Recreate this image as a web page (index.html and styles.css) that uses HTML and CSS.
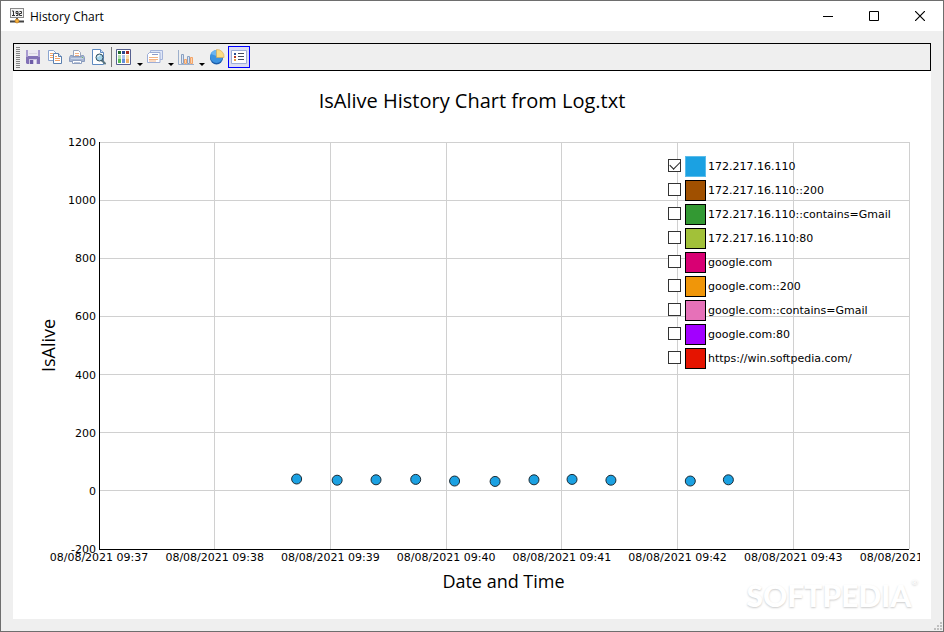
FILE: index.html
```
<!DOCTYPE html>
<html lang="en">
<head>
<meta charset="UTF-8">
<meta name="viewport" content="width=device-width, initial-scale=1.0">
<title>History Chart</title>
<link rel="stylesheet" href="styles.css">
</head>
<body>
<div class="window">

<header class="titlebar">
    <svg class="app-icon" width="16" height="16" viewBox="0 0 16 16">
        <rect x="1.500" y="0.500" width="13" height="9" fill="#f4f4f4" stroke="#8a8a8a"/>
        <path d="M3 3h1.500v4M3 7.500h3M7 3.500h2v3M9 5.500H7v-2M9 6v1.500H7M10.500 3.500h2v2h-2v2h2.500" fill="none" stroke="#333"/>
        <path d="M8 10v2" stroke="#555" stroke-width="2"/>
        <path d="M1 13.500h14" stroke="#444" stroke-width="2"/>
        <circle cx="8" cy="13" r="2" fill="#f7b23b" stroke="#b9741a" stroke-width=".6"/>
    </svg>
    <span class="window-title">History Chart</span>
    <button class="win-btn" aria-label="Minimize">
        <svg width="10" height="11" viewBox="0 0 10 11"><path d="M0 5.500h10" stroke="#000"/></svg>
    </button>
    <button class="win-btn" aria-label="Maximize">
        <svg width="10" height="10" viewBox="0 0 10 10"><path d="M.5.5h9v9h-9z" fill="none" stroke="#000"/></svg>
    </button>
    <button class="win-btn" aria-label="Close">
        <svg width="10" height="10" viewBox="0 0 10 10"><path d="M0 0l10 10M10 0L0 10" stroke="#000" stroke-width="1.200"/></svg>
    </button>
</header>

<main class="client">
    <div class="toolbar">
        <span class="grip"></span>
        <button class="tool" aria-label="Save">
            <svg width="16" height="16" viewBox="0 0 16 16">
                <path d="M1 1h14v14H2l-1-1z" fill="#8271b6"/>
                <path d="M1 1h2v7H1zM13 1h2v7h-2z" fill="#a89bd0"/>
                <path d="M3 1h10v6H3z" fill="#eceaf3"/>
                <path d="M4 4.500h8" stroke="#d9d7e2"/>
                <path d="M4 10h8v5H4z" fill="#cbc5e2"/>
                <path d="M5 11h3v4H5z" fill="#6d5ca6"/>
                <path d="M9 11h2v4H9z" fill="#efedf6"/>
            </svg>
        </button>
        <button class="tool" aria-label="Copy">
            <svg width="16" height="16" viewBox="0 0 16 16">
                <path d="M1.500 1.500h5l3 3v7h-8z" fill="#fff" stroke="#8aa5d0"/>
                <path d="M3 4.500h3M3 6.500h4M3 8.500h4" stroke="#f3a468"/>
                <path d="M6.500 4.500h5l3 3v7h-8z" fill="#fff" stroke="#5b7fae"/>
                <path d="M11.500 4.500v3h3" fill="#d6e4f5" stroke="#5b7fae"/>
                <path d="M8 7.500h2M8 9.500h5M8 11.500h5" stroke="#f3a468"/>
            </svg>
        </button>
        <button class="tool" aria-label="Print">
            <svg width="16" height="16" viewBox="0 0 16 16">
                <path d="M4.500 7V1.500h5l2 2V7" fill="#fff" stroke="#9aa6bd"/>
                <path d="M6 4.500h4M6 6.500h4" stroke="#f3b184"/>
                <path d="M1.500 6.500h2v1h9v-1h2l1 2v4H.5v-4z" fill="#a7b6d3" stroke="#8b9cbe"/>
                <path d="M2 9.500h12" stroke="#c8d4e8"/>
                <path d="M13 8h1v1h-1z" fill="#6bc35a"/>
                <path d="M3.500 11.500h9v3h-9z" fill="#fff" stroke="#8fa0c0"/>
                <path d="M5 13.500h6" stroke="#b8c3d8"/>
            </svg>
        </button>
        <button class="tool" aria-label="Print preview">
            <svg width="16" height="16" viewBox="0 0 16 16">
                <path d="M1.500.5h8l3 3v12h-11z" fill="#fff" stroke="#5f8ac0"/>
                <path d="M9.500.5v3h3" fill="#cfe0f4" stroke="#5f8ac0"/>
                <path d="M11 11.500l3 3" stroke="#5c7680" stroke-width="2" stroke-linecap="round"/>
                <circle cx="8.500" cy="8.500" r="3.500" fill="#a6d5ea" stroke="#33505e"/>
                <path d="M6.700 8a2 2 0 0 1 2-1.600" fill="none" stroke="#fff"/>
            </svg>
        </button>
        <span class="separator"></span>
        <button class="tool" aria-label="Palette">
            <svg width="16" height="16" viewBox="0 0 16 16">
                <path d="M.5.5h14v15H.5z" fill="#fff" stroke="#56608f"/>
                <path d="M2 2h3v3H2z" fill="#226b2e"/><path d="M6 2h3v3H6z" fill="#2c4790"/><path d="M10 2h3v3h-3z" fill="#a52b22"/>
                <path d="M2 6h3v4H2z" fill="#b2e0ad"/><path d="M6 6h3v4H6z" fill="#a9c6f0"/><path d="M10 6h3v4h-3z" fill="#f9dda6"/>
                <path d="M2 10h3v4H2z" fill="#55b956"/><path d="M6 10h3v4H6z" fill="#668fdc"/><path d="M10 10h3v4h-3z" fill="#efb168"/>
            </svg>
        </button>
        <button class="drop" aria-label="Palette options"></button>
        <button class="tool" aria-label="Titles">
            <svg width="16" height="16" viewBox="0 0 16 16">
                <path d="M3.500 4V1.500h12v9H13" fill="#dfe7f7" stroke="#a5b4da"/>
                <path d="M.5 5.500l2-2h10.500v10H.5z" fill="#fff" stroke="#9dadd6"/>
                <path d="M5 5.500h6" stroke="#8d9cc9"/>
                <path d="M2 8.500h9M2 10.500h9M2 12h7" stroke="#f5b384"/>
            </svg>
        </button>
        <button class="drop" aria-label="Title options"></button>
        <button class="tool" aria-label="Chart type">
            <svg width="16" height="16" viewBox="0 0 16 16">
                <path d="M.5 1v14.500H16" fill="none" stroke="#9cafcb"/>
                <path d="M3.500 5.500h2v9h-2zM9.500 7.500h2v7h-2z" fill="#dbe7f6" stroke="#8ba0c0"/>
                <path d="M6.500 10.500h2v4h-2zM12.500 8.500h2v6h-2z" fill="#fbd3ae" stroke="#f3a468"/>
            </svg>
        </button>
        <button class="drop" aria-label="Chart type options"></button>
        <button class="tool" aria-label="3D pie">
            <svg width="16" height="16" viewBox="0 0 16 16">
                <ellipse cx="7.500" cy="9" rx="6.500" ry="6.500" fill="#1c5ca8"/>
                <ellipse cx="7.500" cy="7.500" rx="6.500" ry="6.500" fill="#3c93e0"/>
                <path d="M2 5a6.500 6.500 0 0 1 5.500-4v6" fill="#6bb5f0"/>
                <path d="M7.500 8.500V.5a7 7 0 0 1 7.500 8z" fill="#fbdc83" stroke="#d7a850" stroke-width=".6"/>
            </svg>
        </button>
        <button class="tool active" aria-label="Legend" aria-pressed="true">
            <svg width="16" height="16" viewBox="0 0 16 16">
                <path d="M.5 1.500h15v13H.5z" fill="#fff" stroke="#9dadd6"/>
                <path d="M3 4h2v2H3z" fill="#2d4f92"/><path d="M3 7h2v2H3z" fill="#b33a27"/><path d="M3 10h2v2H3z" fill="#eb9a3c"/>
                <path d="M7 4.500h6M7 7.500h6M7 10.500h6" stroke="#444a5e"/>
            </svg>
        </button>
    </div>

    <section class="chart">
        <h1 class="chart-title">IsAlive History Chart from Log.txt</h1>

        <div class="chart-body">
            <div class="y-title">IsAlive</div>
            <div class="plot">
                <svg class="plot-svg" width="100%" height="100%">
                    <g class="grid">
                        <line x1="14.286%" x2="14.286%" y1="0" y2="100%"/>
                        <line x1="28.571%" x2="28.571%" y1="0" y2="100%"/>
                        <line x1="42.857%" x2="42.857%" y1="0" y2="100%"/>
                        <line x1="57.143%" x2="57.143%" y1="0" y2="100%"/>
                        <line x1="71.429%" x2="71.429%" y1="0" y2="100%"/>
                        <line x1="85.714%" x2="85.714%" y1="0" y2="100%"/>
                        <line x1="100%" x2="100%" y1="0" y2="100%"/>
                        <line x1="0" x2="100%" y1="0" y2="0"/>
                        <line x1="0" x2="100%" y1="14.286%" y2="14.286%"/>
                        <line x1="0" x2="100%" y1="28.571%" y2="28.571%"/>
                        <line x1="0" x2="100%" y1="42.857%" y2="42.857%"/>
                        <line x1="0" x2="100%" y1="57.143%" y2="57.143%"/>
                        <line x1="0" x2="100%" y1="71.429%" y2="71.429%"/>
                        <line x1="0" x2="100%" y1="85.714%" y2="85.714%"/>
                    </g>
                    <g class="axis">
                        <line x1="0" x2="0" y1="0" y2="100%"/>
                        <line x1="0" x2="100%" y1="100%" y2="100%"/>
                    </g>
                    <g class="y-labels">
                        <text x="0" y="0" dx="-3" dy="4">1200</text>
                        <text x="0" y="14.286%" dx="-3" dy="4">1000</text>
                        <text x="0" y="28.571%" dx="-3" dy="4">800</text>
                        <text x="0" y="42.857%" dx="-3" dy="4">600</text>
                        <text x="0" y="57.143%" dx="-3" dy="4">400</text>
                        <text x="0" y="71.429%" dx="-3" dy="4">200</text>
                        <text x="0" y="85.714%" dx="-3" dy="4">0</text>
                        <text x="0" y="100%" dx="-3" dy="4">-200</text>
                    </g>
                    <g class="x-labels">
                        <text x="0" y="100%" dy="12">08/08/2021 09:37</text>
                        <text x="14.286%" y="100%" dy="12">08/08/2021 09:38</text>
                        <text x="28.571%" y="100%" dy="12">08/08/2021 09:39</text>
                        <text x="42.857%" y="100%" dy="12">08/08/2021 09:40</text>
                        <text x="57.143%" y="100%" dy="12">08/08/2021 09:41</text>
                        <text x="71.429%" y="100%" dy="12">08/08/2021 09:42</text>
                        <text x="85.714%" y="100%" dy="12">08/08/2021 09:43</text>
                        <text x="100%" y="100%" dy="12">08/08/2021 09:44</text>
                    </g>
                    <g class="points">
                        <circle cx="24.4%" cy="82.8%" r="5"/>
                        <circle cx="29.4%" cy="83.1%" r="5"/>
                        <circle cx="34.2%" cy="83%" r="5"/>
                        <circle cx="39.1%" cy="82.900%" r="5"/>
                        <circle cx="43.9%" cy="83.3%" r="5"/>
                        <circle cx="48.9%" cy="83.4%" r="5"/>
                        <circle cx="53.7%" cy="83%" r="5"/>
                        <circle cx="58.4%" cy="82.900%" r="5"/>
                        <circle cx="63.2%" cy="83.1%" r="5"/>
                        <circle cx="73%" cy="83.3%" r="5"/>
                        <circle cx="77.7%" cy="83%" r="5"/>
                    </g>
                </svg>

                <div class="legend">
                    <label class="legend-row"><input type="checkbox" checked><span class="swatch blue"></span>172.217.16.110</label>
                    <label class="legend-row"><input type="checkbox"><span class="swatch brown"></span>172.217.16.110::200</label>
                    <label class="legend-row"><input type="checkbox"><span class="swatch green"></span>172.217.16.110::contains=Gmail</label>
                    <label class="legend-row"><input type="checkbox"><span class="swatch lime"></span>172.217.16.110:80</label>
                    <label class="legend-row"><input type="checkbox"><span class="swatch magenta"></span>google.com</label>
                    <label class="legend-row"><input type="checkbox"><span class="swatch orange"></span>google.com::200</label>
                    <label class="legend-row"><input type="checkbox"><span class="swatch pink"></span>google.com::contains=Gmail</label>
                    <label class="legend-row"><input type="checkbox"><span class="swatch purple"></span>google.com:80</label>
                    <label class="legend-row"><input type="checkbox"><span class="swatch red"></span>https://win.softpedia.com/</label>
                </div>
            </div>
        </div>

        <div class="x-title">Date and Time</div>
        <div class="watermark">SOFTPEDIA<sup>®</sup></div>
    </section>
</main>

<svg class="resize-grip" width="8" height="8" viewBox="0 0 8 8">
    <path d="M6 0h2v2H6zM3 3h2v2H3zM6 3h2v2H6zM0 6h2v2H0zM3 6h2v2H3zM6 6h2v2H6z" fill="#bfbfbf"/>
</svg>
</div>
</body>
</html>
```
FILE: styles.css
```
* {
    box-sizing: border-box;
}

body {
    margin: 0;
    font-family: "DejaVu Sans", Verdana, sans-serif;
    font-size: 11px;
    color: #000;
}

button {
    border: none;
    background: none;
    padding: 0;
}

.window {
    position: relative;
    display: flex;
    flex-direction: column;
    height: 100vh;
    border: 1px solid #6e6e6e;
    background-color: #efefef;
}

/* Title bar */
.titlebar {
    display: flex;
    align-items: center;
    height: 30px;
    padding-left: 8px;
    background-color: #fff;
}

.window-title {
    flex: 1;
    margin-left: 5px;
    font-family: "Open Sans", "Noto Sans", sans-serif;
    font-size: 12px;
}

.win-btn {
    display: flex;
    align-items: center;
    justify-content: center;
    width: 46px;
    height: 30px;
}

/* Content */
.client {
    flex: 1;
    display: flex;
    flex-direction: column;
    min-height: 0;
    padding: 12px;
}

.toolbar {
    display: flex;
    align-items: center;
    height: 28px;
    padding-left: 2px;
    border: 1px solid #000;
}

.grip {
    width: 4px;
    height: 21px;
    margin-right: 2px;
    background: repeating-linear-gradient(#858585 0 1px, #efefef 1px 2px);
}

.tool {
    display: flex;
    align-items: center;
    justify-content: center;
    width: 22px;
    height: 22px;
}

.tool.active {
    border: 1px solid #0000ff;
    background-color: #dcdcf2;
}

.separator {
    width: 1px;
    height: 20px;
    margin: 0 1px;
    background-color: #777;
}

.drop {
    display: flex;
    align-items: flex-end;
    justify-content: center;
    width: 9px;
    height: 22px;
    padding-bottom: 2px;
}

.drop::after {
    content: "";
    border: 3px solid transparent;
    border-top-color: #000;
    border-bottom: none;
}

/* Chart */
.chart {
    position: relative;
    flex: 1;
    display: flex;
    flex-direction: column;
    min-height: 0;
    padding: 0 11px;
    background-color: #fff;
}

.chart-title {
    margin: 0;
    height: 71px;
    padding-top: 16px;
    font-family: "Open Sans", "Noto Sans", sans-serif;
    font-size: 20px;
    font-weight: 400;
    line-height: 28px;
    text-align: center;
}

/* the last time label runs past the plot and is cut here */
.chart-body {
    flex: 1;
    display: flex;
    min-height: 0;
    padding-right: 11px;
    overflow-x: clip;
}

.y-title,
.x-title {
    font-family: "Open Sans", "Noto Sans", sans-serif;
    font-size: 18px;
    line-height: 24px;
    text-align: center;
}

.y-title {
    width: 75px;
    padding-right: 12px;
    writing-mode: vertical-rl;
    transform: rotate(180deg);
}

.x-title {
    height: 70px;
    padding: 20px 12px 0 75px;
}

.plot {
    position: relative;
    flex: 1;
}

.plot-svg {
    display: block;
    overflow: visible;
}

.grid line {
    stroke: #d0d0d0;
    shape-rendering: crispEdges;
}

.axis line {
    stroke: #000;
    shape-rendering: crispEdges;
}

.y-labels text {
    text-anchor: end;
}

.x-labels text {
    text-anchor: middle;
}

.points circle {
    fill: #1ba1e2;
    stroke: #1c2a33;
    stroke-width: 1;
}

/* Legend */
.legend {
    position: absolute;
    top: 12px;
    right: 0;
    width: 241px;
}

.legend-row {
    display: flex;
    align-items: center;
    height: 24px;
}

.legend-row input {
    appearance: none;
    display: grid;
    place-items: center;
    width: 13px;
    height: 13px;
    margin: 0 4px 2px 0;
    border: 1px solid #333;
    background-color: #fff;
}

.legend-row input:checked::after {
    content: "";
    width: 9px;
    height: 5px;
    margin-bottom: 3px;
    border-left: 1px solid #222;
    border-bottom: 1px solid #222;
    transform: rotate(-45deg);
}

.swatch {
    width: 21px;
    height: 21px;
    margin-right: 2px;
    border: 1px solid #000;
}

.blue { background-color: #1ba1e2; border-color: #5bbcea; }
.brown { background-color: #a05000; }
.green { background-color: #339933; }
.lime { background-color: #a2c139; }
.magenta { background-color: #d80073; }
.orange { background-color: #f09609; }
.pink { background-color: #e671b8; }
.purple { background-color: #a200ff; }
.red { background-color: #e51400; }

.watermark {
    position: absolute;
    right: 13px;
    bottom: 6px;
    font-family: Lato, sans-serif;
    font-size: 30px;
    font-weight: 900;
    line-height: 36px;
    color: #fff;
    text-shadow: 0 1px 2px #ccc;
}

.watermark sup {
    font-size: 8px;
    line-height: 10px;
    vertical-align: top;
}

.resize-grip {
    position: absolute;
    right: 1px;
    bottom: 1px;
}
```
